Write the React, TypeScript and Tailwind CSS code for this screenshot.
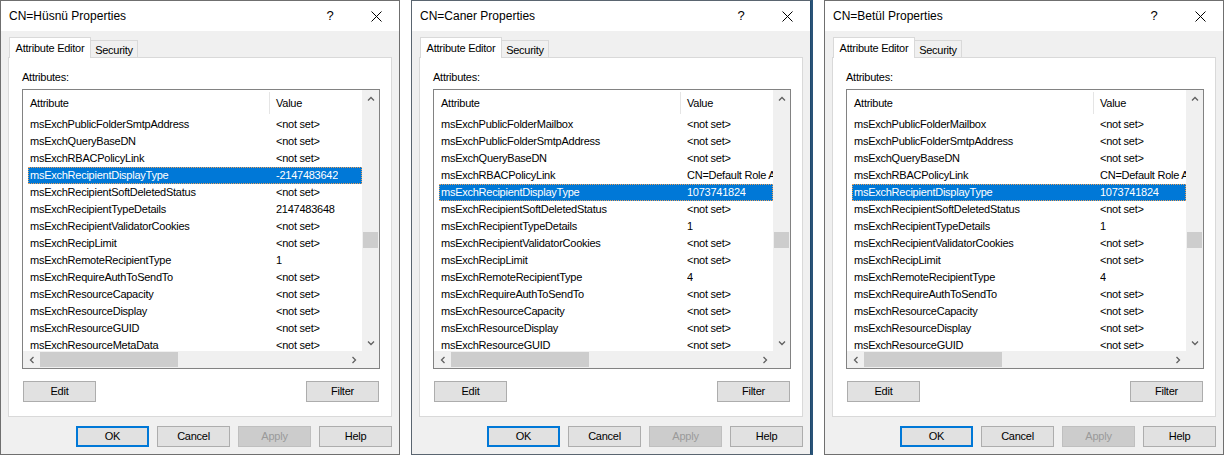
type Row = [string, string]

const husnuRows: Row[] = [
  ['msExchPublicFolderSmtpAddress', '<not set>'],
  ['msExchQueryBaseDN', '<not set>'],
  ['msExchRBACPolicyLink', '<not set>'],
  ['msExchRecipientDisplayType', '-2147483642'],
  ['msExchRecipientSoftDeletedStatus', '<not set>'],
  ['msExchRecipientTypeDetails', '2147483648'],
  ['msExchRecipientValidatorCookies', '<not set>'],
  ['msExchRecipLimit', '<not set>'],
  ['msExchRemoteRecipientType', '1'],
  ['msExchRequireAuthToSendTo', '<not set>'],
  ['msExchResourceCapacity', '<not set>'],
  ['msExchResourceDisplay', '<not set>'],
  ['msExchResourceGUID', '<not set>'],
  ['msExchResourceMetaData', '<not set>'],
]

const mailboxRows: Row[] = [
  ['msExchPublicFolderMailbox', '<not set>'],
  ['msExchPublicFolderSmtpAddress', '<not set>'],
  ['msExchQueryBaseDN', '<not set>'],
  ['msExchRBACPolicyLink', 'CN=Default Role Assignment Policy'],
  ['msExchRecipientDisplayType', '1073741824'],
  ['msExchRecipientSoftDeletedStatus', '<not set>'],
  ['msExchRecipientTypeDetails', '1'],
  ['msExchRecipientValidatorCookies', '<not set>'],
  ['msExchRecipLimit', '<not set>'],
  ['msExchRemoteRecipientType', '4'],
  ['msExchRequireAuthToSendTo', '<not set>'],
  ['msExchResourceCapacity', '<not set>'],
  ['msExchResourceDisplay', '<not set>'],
  ['msExchResourceGUID', '<not set>'],
]

function Chevron({ dir }: { dir: 'up' | 'down' | 'left' | 'right' }) {
  const points = {
    up: '1,5.5 4,2.5 7,5.5',
    down: '1,2.5 4,5.5 7,2.5',
    left: '5.5,1 2.5,4 5.5,7',
    right: '2.5,1 5.5,4 2.5,7',
  }[dir]
  return (
    <svg width="8" height="8" viewBox="0 0 8 8">
      <polyline points={points} fill="none" stroke="#606060" strokeWidth="1.3" />
    </svg>
  )
}

function WinButton({ label, primary, disabled }: { label: string; primary?: boolean; disabled?: boolean }) {
  let cls = 'border border-[#adadad] bg-[#e1e1e1] text-black'
  if (primary) cls = 'border-2 border-[#0078d7] bg-[#e1e1e1] text-black'
  if (disabled) cls = 'border border-[#bfbfbf] bg-[#cccccc] text-[#9a9a9a]'
  return (
    <div className={`flex h-[21px] w-[73px] items-center justify-center text-[11px] ${cls}`}>
      {label}
    </div>
  )
}

function AttributeList({ rows, selected }: { rows: Row[]; selected: number }) {
  return (
    <div className="mt-[5px] flex h-[280px] w-[358px] flex-col border border-[#828282] bg-white">
      <div className="flex h-[261px]">
        <div className="w-[339px] overflow-hidden">
          <div className="flex h-[26px] items-center">
            <div className="w-[246px] pl-[7px]">Attribute</div>
            <div className="h-[22px] w-px bg-[#e5e5e5]" />
            <div className="pl-[6px]">Value</div>
          </div>
          {rows.map(([name, value], i) => (
            <div
              key={name}
              className={`ml-[5px] flex h-[17px] w-[334px] items-center ${
                i === selected ? 'bg-[#0078d7] text-white outline-1 -outline-offset-1 outline-dotted outline-[#e9a05c]' : ''
              }`}
            >
              <div className="w-[248px] shrink-0 whitespace-nowrap pl-[2px]">{name}</div>
              <div className="overflow-hidden whitespace-nowrap">{value}</div>
            </div>
          ))}
        </div>
        <div className="flex w-[17px] flex-col bg-[#f0f0f0]">
          <div className="flex h-[17px] items-center justify-center">
            <Chevron dir="up" />
          </div>
          <div className="flex-1 px-px pt-[125px]">
            <div className="h-[16px] bg-[#cdcdcd]" />
          </div>
          <div className="flex h-[17px] items-center justify-center">
            <Chevron dir="down" />
          </div>
        </div>
      </div>
      <div className="flex h-[17px] bg-[#f0f0f0]">
        <div className="flex w-[17px] items-center justify-center">
          <Chevron dir="left" />
        </div>
        <div className="flex-1 py-px">
          <div className="h-full w-[138px] bg-[#cdcdcd]" />
        </div>
        <div className="flex w-[17px] items-center justify-center">
          <Chevron dir="right" />
        </div>
        <div className="w-[17px]" />
      </div>
    </div>
  )
}

function PropertiesDialog({
  title,
  rows,
  selected,
  borderClass,
}: {
  title: string
  rows: Row[]
  selected: number
  borderClass: string
}) {
  return (
    <div className={`flex h-[455px] w-[400px] shrink-0 flex-col border bg-[#f0f0f0] ${borderClass}`}>
      <div className="flex h-[30px] items-center bg-white">
        <div className="flex-1 pl-[8px] text-[12px] tracking-normal">{title}</div>
        <div className="flex h-full w-[46px] items-center justify-center text-[13px]">?</div>
        <div className="flex h-full w-[46px] items-center justify-center">
          <svg width="11" height="11" viewBox="0 0 11 11">
            <path d="M0.5 0.5 L10.5 10.5 M10.5 0.5 L0.5 10.5" stroke="#000" strokeWidth="1" />
          </svg>
        </div>
      </div>
      <div className="flex flex-1 flex-col px-[7px] pt-[6px]">
        <div className="flex h-[20px] items-end pl-px">
          <div className="relative z-10 -mb-px flex h-[21px] w-[82px] items-center justify-center border border-b-0 border-[#d9d9d9] bg-white">
            Attribute Editor
          </div>
          <div className="flex h-[17px] w-[47px] items-center justify-center border border-b-0 border-l-0 border-[#d9d9d9] bg-[#f0f0f0] pt-[2px]">
            Security
          </div>
        </div>
        <div className="flex h-[360px] w-[384px] flex-col border border-[#d9d9d9] bg-white px-[13px] pt-[13px]">
          <div className="h-[13px] leading-[13px]">Attributes:</div>
          <AttributeList rows={rows} selected={selected} />
          <div className="mt-[12px] flex w-[358px] justify-between px-px">
            <WinButton label="Edit" />
            <WinButton label="Filter" />
          </div>
        </div>
        <div className="mt-[9px] flex justify-end gap-[8px]">
          <WinButton label="OK" primary />
          <WinButton label="Cancel" />
          <WinButton label="Apply" disabled />
          <WinButton label="Help" />
        </div>
      </div>
    </div>
  )
}

export default function App() {
  return (
    <div
      className="flex h-[455px] w-[1225px] overflow-hidden bg-white text-[11px] tracking-[-0.25px] text-black"
      style={{ fontFamily: '"Liberation Sans", Arial, sans-serif' }}
    >
      <PropertiesDialog title="CN=Hüsnü Properties" rows={husnuRows} selected={3} borderClass="border-[#6f6f6f]" />
      <div className="w-[11px] shrink-0" />
      <PropertiesDialog title="CN=Caner Properties" rows={mailboxRows} selected={4} borderClass="border-[#5a6570] border-r-[#1f4a6e]" />
      <div className="flex w-[13px] shrink-0">
        <div className="w-[2px] bg-[#2a5478]" />
      </div>
      <PropertiesDialog title="CN=Betül Properties" rows={mailboxRows} selected={4} borderClass="border-[#6f6f6f]" />
    </div>
  )
}
